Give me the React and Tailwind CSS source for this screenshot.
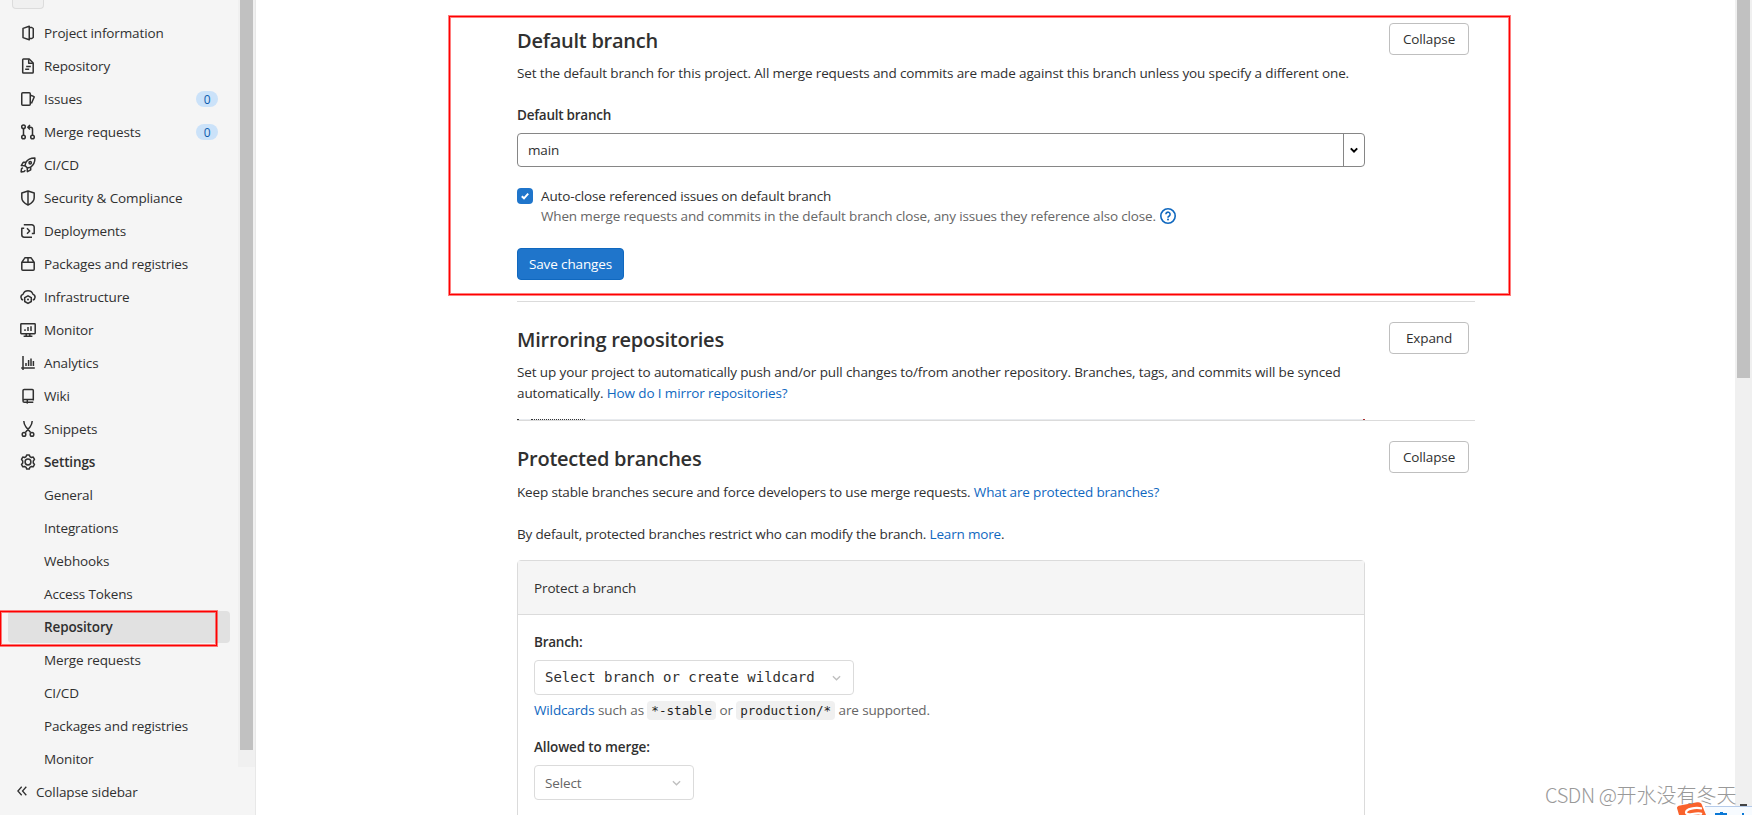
import { useState } from 'react'

// 16x16 line icons for the sidebar
const ICONS = {
  project: (
    <>
      <path d="M9.25 1.2 3 3.4v9.2l6.25 2.2z" />
      <path d="M9.5 2.5h2.3l1.45 1v9l-1.45 1H9.5" />
    </>
  ),
  doc: (
    <>
      <path d="M3.5 1h5.7l4 4v9.2a.8.8 0 0 1-.8.8H3.5a.8.8 0 0 1-.8-.8V1.8a.8.8 0 0 1 .8-.8z" />
      <path d="M8.7 1.2v4.1h4.2M5.2 11.2h4M6.2 8.5h4.6" />
    </>
  ),
  issues: (
    <>
      <rect x="1.75" y="1.75" width="8.5" height="12.5" rx="1" />
      <path d="m10.5 4.2 3.2 1.2c.4.1.6.5.4.9l-2.7 6.2" />
    </>
  ),
  merge: (
    <>
      <circle cx="3.5" cy="2.7" r="1.8" />
      <circle cx="3.5" cy="13" r="1.8" />
      <circle cx="12.5" cy="13" r="1.8" />
      <path d="M3.5 4.5v6.7M12.5 11.2V5.3a2 2 0 0 0-2-2H8M10 .9 7.8 3.2l2.2 2.3" />
    </>
  ),
  rocket: (
    <>
      <path d="M14.9 1.1c-4.1-.1-7 1-9.1 4.4L5 8.6 7.4 11l3.1-.8c3.3-2.1 4.5-5 4.4-9.1z" />
      <path d="M5.8 5.3H3.2L1.3 8.6l3.6.2M10.7 10.2v2.6l-3.3 1.9-.2-3.6M2.8 10.6l-1.3 1.2-.4 3.1 3-.4 1.3-1.3" />
      <circle cx="10.2" cy="5.8" r="1.2" />
    </>
  ),
  shield: (
    <>
      <path d="M8 1 14.2 3v4.8c0 3.2-2.6 5.6-6.2 7.2-3.6-1.6-6.2-4-6.2-7.2V3z" />
      <path d="M8 1v14" />
    </>
  ),
  deploy: (
    <>
      <path d="M3.8 1.8h8a2.4 2.4 0 0 1 2.4 2.4v6.4h-2.4M12 14.2H4.2a2.4 2.4 0 0 1-2.4-2.4V5.2h2.4" />
      <path d="m7 5.3 2.7 2.7L7 10.7" />
    </>
  ),
  package: (
    <path d="M1.8 6.3h12.4v7a1 1 0 0 1-1 1H2.8a1 1 0 0 1-1-1zM1.8 6.3l2.7-4a1 1 0 0 1 .8-.5h5.4a1 1 0 0 1 .8.5l2.7 4M8 1.8v4.5" />
  ),
  cloud: (
    <>
      <path d="M3.2 11A2.9 2.9 0 0 1 3 5.4a5.2 5.2 0 0 1 10 0 2.9 2.9 0 0 1-.2 5.6" />
      <path d="m8 6.8 3.3 1.9v3.8L8 14.4l-3.3-1.9V8.7z" />
      <circle cx="8" cy="10.6" r="1" fill="currentColor" stroke="none" />
    </>
  ),
  monitor: (
    <>
      <rect x=".8" y="1.8" width="14.4" height="9.9" rx=".6" />
      <path d="M5 7.2v1.7M8 5v3.9M11 4.3v4.6M6.2 11.7v2M9.8 11.7v2M3.6 14.2h8.8" />
    </>
  ),
  chart: <path d="M3 1v14M1.2 12.9h13.6M6 8v3M8.6 5v6M11 3.6V11M13.4 6v5" />,
  book: (
    <>
      <path d="M3 12.5V2.6a1.2 1.2 0 0 1 1.2-1.2h8.1a1 1 0 0 1 1 1v10.1M13.3 11.5H4.4a1.4 1.4 0 0 0 0 2.8h8.9" />
      <path d="M7.3 12v3.6" />
    </>
  ),
  scissors: (
    <>
      <path d="M3.8 0c.1 2.7.8 4.3 2.2 6.1l4.6 5.4M12.2 0c-.1 2.7-.8 4.3-2.2 6.1l-4.6 5.4" />
      <circle cx="4" cy="13.4" r="1.8" />
      <circle cx="12" cy="13.4" r="1.8" />
    </>
  ),
  gear: (
    <>
      <path d="M6.7.9h2.6l.6 1.7 1.5.9 1.8-.4 1.3 2.3L13.3 7v2l1.2 1.5-1.3 2.3-1.8-.4-1.5.9-.6 1.8H6.7l-.6-1.8-1.5-.9-1.8.4-1.3-2.3L2.7 9V7L1.5 5.4l1.3-2.3 1.8.4 1.5-.9z" />
      <circle cx="8" cy="8" r="2.9" />
    </>
  ),
}

const NAV = [
  { icon: 'project', label: 'Project information' },
  { icon: 'doc', label: 'Repository' },
  { icon: 'issues', label: 'Issues', count: 0 },
  { icon: 'merge', label: 'Merge requests', count: 0 },
  { icon: 'rocket', label: 'CI/CD' },
  { icon: 'shield', label: 'Security & Compliance' },
  { icon: 'deploy', label: 'Deployments' },
  { icon: 'package', label: 'Packages and registries' },
  { icon: 'cloud', label: 'Infrastructure' },
  { icon: 'monitor', label: 'Monitor' },
  { icon: 'chart', label: 'Analytics' },
  { icon: 'book', label: 'Wiki' },
  { icon: 'scissors', label: 'Snippets' },
  { icon: 'gear', label: 'Settings', bold: true },
]

const SETTINGS_NAV = [
  'General',
  'Integrations',
  'Webhooks',
  'Access Tokens',
  'Repository',
  'Merge requests',
  'CI/CD',
  'Packages and registries',
  'Monitor',
]

function Icon({ name }) {
  return (
    <svg
      viewBox="0 0 16 16"
      className="size-4 shrink-0"
      fill="none"
      stroke="currentColor"
      strokeWidth="1.5"
      strokeLinejoin="round"
    >
      {ICONS[name]}
    </svg>
  )
}

function Chevron({ className }) {
  return (
    <svg viewBox="0 0 10 6" className={className} fill="none" stroke="currentColor">
      <path d="m1 1 4 4 4-4" />
    </svg>
  )
}

function Link({ children }) {
  return <a href="#" className="text-[#1068bf]">{children}</a>
}

function Button({ children, onClick }) {
  return (
    <button
      type="button"
      onClick={onClick}
      className="h-8 w-20 shrink-0 rounded-[4px] border border-[#bfbfbf] bg-white pb-px"
    >
      {children}
    </button>
  )
}

function Sidebar() {
  const [active, setActive] = useState('Repository')

  return (
    <aside className="flex w-64 shrink-0 flex-col border-r border-[#e8e8e8] bg-[#f5f5f5]">
      <div className="flex h-[767px] shrink-0">
        <div className="w-[238px]">
          {/* bottom edge of the project avatar */}
          <div className="ml-3 h-[9px] w-8 rounded-b-[4px] border border-t-0 border-[#dcdcdc] bg-[#f0f0f0]" />
          <nav className="mt-2 flex flex-col gap-px pl-2">
            {NAV.map((item) => (
              <a key={item.label} href="#" className="flex h-8 w-[222px] items-center pl-3">
                <Icon name={item.icon} />
                <span className={`ml-2 flex-1 ${item.bold ? 'font-semibold' : ''}`}>{item.label}</span>
                {item.count !== undefined && (
                  <span className="mr-3 h-4 w-[22px] rounded-full bg-[#cbe2f9] text-center text-xs leading-[17px] text-[#0b5cad]">
                    {item.count}
                  </span>
                )}
              </a>
            ))}
            {SETTINGS_NAV.map((label) => (
              <a
                key={label}
                href="#"
                onClick={() => setActive(label)}
                className={`flex h-8 w-[222px] items-center rounded-[4px] pl-9 ${
                  active === label ? 'bg-[#e1e1e1] font-semibold' : ''
                }`}
              >
                {label}
              </a>
            ))}
          </nav>
        </div>
        <div className="w-[17px] bg-[#f0f0f0] pl-[2px]">
          <div className="h-[750px] w-[13px] bg-[#c1c1c1]" />
        </div>
      </div>
      <button type="button" className="mt-[9px] flex h-8 items-center pl-[17px]">
        <svg viewBox="0 0 10 10" className="mb-[2px] size-[10px]" fill="none" stroke="currentColor" strokeWidth="1.3">
          <path d="M4.7.7.9 5l3.8 4.3M9.3.7 5.5 5l3.8 4.3" />
        </svg>
        <span className="ml-[9px]">Collapse sidebar</span>
      </button>
    </aside>
  )
}

function Section({ title, open, className, children }) {
  const [expanded, setExpanded] = useState(open)

  return (
    <section className={`relative ${className}`}>
      <div className="flex h-8 items-start justify-between pr-[6px]">
        <h4 className="mt-1 text-[20px] leading-7 font-semibold tracking-[-0.25px]">{title}</h4>
        <Button onClick={() => setExpanded(!expanded)}>{expanded ? 'Collapse' : 'Expand'}</Button>
      </div>
      {children}
    </section>
  )
}

export default function App() {
  return (
    <div className="relative flex h-[815px] w-[1752px] overflow-hidden bg-white font-['Open_Sans','Noto_Sans',sans-serif] text-[13.5px] leading-5 tracking-[-0.13px] text-[#303030]">
      <Sidebar />

      <main className="flex-1 pl-[261px]">
        <div className="w-[958px]">
          <Section title="Default branch" open className="h-[302px] border-b border-[#dbdbdb] pt-[23px]">
            <p className="mt-2">
              Set the default branch for this project. All merge requests and commits are made against this branch unless
              you specify a different one.
            </p>
            <p className="mt-[22px] font-semibold tracking-[-0.25px]">Default branch</p>
            <div className="mt-2 flex h-[34px] w-[848px] items-center rounded-[4px] border border-[#868686]">
              <span className="flex-1 pl-[10px]">main</span>
              <span className="flex h-full w-[21px] items-center justify-center border-l border-[#868686] text-black">
                <Chevron className="h-[6px] w-2 stroke-[2.5]" />
              </span>
            </div>
            <div className="mt-[19px] flex gap-2">
              <span className="mt-[2px] flex size-4 items-center justify-center rounded-[4px] bg-[#1f75cb]">
                <svg viewBox="0 0 8 8" className="size-2" fill="none" stroke="white" strokeWidth="2">
                  <path d="M.8 4.2 3 6.3 7.2 1.7" />
                </svg>
              </span>
              <div>
                <p>Auto-close referenced issues on default branch</p>
                <p className="flex items-center tracking-[-0.15px] text-[#666]">
                  When merge requests and commits in the default branch close, any issues they reference also close.
                  <svg viewBox="0 0 16 16" className="ml-1 size-4 text-[#1068bf]" fill="none" stroke="currentColor" strokeWidth="1.6">
                    <circle cx="8" cy="8" r="7.2" />
                    <path d="M5.9 6.3a2.1 2.1 0 1 1 3.3 1.7c-.8.5-1.2.8-1.2 1.7" />
                    <circle cx="8" cy="11.6" r="1" fill="currentColor" stroke="none" />
                  </svg>
                </p>
              </div>
            </div>
            <button
              type="button"
              className="mt-[22px] h-8 w-[107px] rounded-[4px] border border-[#1068bf] bg-[#1f75cb] pb-px text-white"
            >
              Save changes
            </button>
            {/* highlight frame */}
            <div className="pointer-events-none absolute top-[16px] -left-[68px] h-[279px] w-[1061px] border border-[#f00] shadow-[0_0_0_1px_rgba(255,0,0,0.5),inset_0_0_0_1px_rgba(255,0,0,0.5)]" />
          </Section>

          <Section title="Mirroring repositories" className="h-[119px] border-b border-[#dbdbdb] pt-5">
            <p className="mt-2 w-[848px] leading-[21px] tracking-[-0.12px]">
              Set up your project to automatically push and/or pull changes to/from another repository. Branches, tags, and
              commits will be synced automatically. <Link>How do I mirror repositories?</Link>
            </p>
            {/* sliver of the clipped panel behind the divider */}
            <div className="mt-[15px] flex h-px w-[848px] items-center justify-between bg-[#e8ebef]">
              <span className="h-px w-[2px] bg-[#333]" />
              <span className="mr-auto ml-3 w-[54px] border-t border-dotted border-[#333]" />
              <span className="h-px w-[2px] bg-[#a33]" />
            </div>
          </Section>

          <Section title="Protected branches" open className="pt-5">
            <p className="mt-[9px] tracking-[-0.16px]">
              Keep stable branches secure and force developers to use merge requests.{' '}
              <Link>What are protected branches?</Link>
            </p>
            <p className="mt-[22px] tracking-[-0.17px]">
              By default, protected branches restrict who can modify the branch. <Link>Learn more</Link>.
            </p>

            <div className="mt-4 h-[300px] w-[848px] rounded-[4px] border border-[#dbdbdb]">
              <div className="flex h-[54px] items-center border-b border-[#dbdbdb] bg-[#f5f5f5] pl-4">Protect a branch</div>
              <div className="pt-[17px] pl-4">
                <p className="font-semibold tracking-[-0.25px]">Branch:</p>
                <div className="mt-2 flex h-[35px] w-[320px] items-center justify-between rounded-[4px] border border-[#dbdbdb] pr-3 pl-[10px] font-['DejaVu_Sans_Mono',monospace] text-sm tracking-normal">
                  <span className="pb-[2px]">Select branch or create wildcard</span>
                  <Chevron className="h-[6px] w-[9px] text-[#bfbfbf] stroke-[1.5]" />
                </div>
                <p className="mt-[5px] text-[#666]">
                  <Link>Wildcards</Link> such as{' '}
                  <code className="rounded-[4px] bg-[#f0f0f0] px-1 py-[2px] font-['DejaVu_Sans_Mono',monospace] text-[12.6px] tracking-normal text-[#1f1f1f]">
                    *-stable
                  </code>{' '}
                  or{' '}
                  <code className="rounded-[4px] bg-[#f0f0f0] px-1 py-[2px] font-['DejaVu_Sans_Mono',monospace] text-[12.6px] tracking-normal text-[#1f1f1f]">
                    production/*
                  </code>{' '}
                  are supported.
                </p>
                <p className="mt-4 font-semibold">Allowed to merge:</p>
                <div className="mt-2 flex h-[35px] w-[160px] items-center justify-between rounded-[4px] border border-[#dbdbdb] pr-3 pl-[10px] text-[#666]">
                  <span className="pt-px">Select</span>
                  <Chevron className="h-[6px] w-[9px] text-[#bfbfbf] stroke-[1.5]" />
                </div>
              </div>
            </div>
          </Section>
        </div>
      </main>

      <div className="w-[17px] shrink-0 bg-[#f0f0f0] pl-[2px]">
        <div className="h-[378px] w-[13px] bg-[#c1c1c1]" />
      </div>

      {/* highlight around the active settings entry */}
      <div className="pointer-events-none absolute top-[611px] left-0 h-[35px] w-[217px] border border-[#f00] shadow-[0_0_0_1px_rgba(255,0,0,0.5),inset_0_0_0_1px_rgba(255,0,0,0.5)]" />

      {/* input method toolbar peeking in from the corner */}
      <div className="absolute right-0 bottom-0 h-[9px] w-[47px] border-t border-[#b5cbea] bg-[#f7fbff]">
        <svg viewBox="0 0 47 8" className="h-2 w-[47px]" fill="#0a78d6">
          <path d="M10 6h12v2H10zM15 5h3v3h-3zM37 6h2v2h-2z" />
        </svg>
      </div>
      <div className="absolute right-[5px] bottom-[9px] h-[2px] w-[7px] bg-[#444]" />
      <svg viewBox="0 0 30 13" className="absolute bottom-0 left-[1677px] h-[13px] w-[30px]">
        <path d="M0 6Q0 4 3 3.5L20 .3Q24-.4 25 3l4 10H2z" fill="#f9622c" />
        <path d="M25 6.5C18 5 9 7 9 10.5c0 2 3 2 6 1.500 4-.6 8-1 10 0" fill="none" stroke="white" strokeWidth="2.2" />
      </svg>
      <div className="absolute bottom-[8px] left-[1545px] font-['Noto_Sans_CJK_SC',sans-serif] text-[20px] leading-6 font-light tracking-normal whitespace-nowrap text-[#999]">
        <span className="tracking-[-0.4px]">CSDN @</span>开水没有冬天
      </div>
    </div>
  )
}
